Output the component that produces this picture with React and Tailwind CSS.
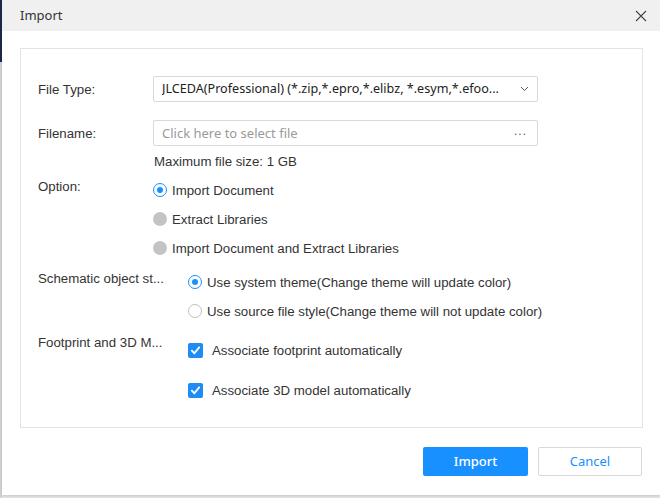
import React, { useState } from "react";

const sans = { fontFamily: '"Liberation Sans", Arial, sans-serif' };
const ui = { fontFamily: '"Noto Sans", "Open Sans", sans-serif' };

const Radio = ({ state }) => {
  if (state === "on") {
    return (
      <span className="w-[14px] h-[14px] rounded-full border border-[#1890ff] bg-white flex items-center justify-center shrink-0">
        <span className="w-[6px] h-[6px] rounded-full bg-[#1890ff]" />
      </span>
    );
  }
  if (state === "disabled") {
    return <span className="w-[14px] h-[14px] rounded-full bg-[#c4c4c4] shrink-0" />;
  }
  return <span className="w-[14px] h-[14px] rounded-full border border-[#c0c0c0] bg-white shrink-0" />;
};

const Check = () => (
  <span className="w-[15px] h-[15px] rounded-[2px] bg-[#1e8cf5] flex items-center justify-center shrink-0">
    <svg width="11" height="11" viewBox="0 0 12 12" fill="none">
      <path d="M2 6.2 L4.8 9 L10 2.6" stroke="white" strokeWidth="2" strokeLinecap="round" strokeLinejoin="round" />
    </svg>
  </span>
);

const App = () => {
  const [option, setOption] = useState(0);
  const [theme, setTheme] = useState(0);

  return (
    <div className="w-[660px] h-[498px] flex bg-[#e6e6e6] overflow-hidden" style={sans}>
      {/* strip of the window behind */}
      <div className="w-[2px] flex flex-col">
        <div className="h-[62px] bg-[#1b2b4d]" />
        <div className="flex-1 bg-[#d4d4d4]" />
      </div>

      <div className="flex-1 flex flex-col h-[495px] bg-white shadow-[0_1px_3px_rgba(0,0,0,0.15)]">
        {/* header */}
        <div className="h-[31px] bg-[#f0f0f0] flex items-center justify-between pl-[18px] pr-[13px] shrink-0">
          <span className="text-[13px] text-[#333]" style={ui}>Import</span>
          <svg width="12" height="12" viewBox="0 0 12 12">
            <path d="M1 1 L11 11 M11 1 L1 11" stroke="#444" strokeWidth="1.1" />
          </svg>
        </div>

        {/* body */}
        <div className="px-[18px] pt-[17px] pr-[17px]">
          <div className="h-[380px] border border-[#e3e3e3] pt-[27px] pl-[17px] text-[13.25px] text-[#333]">
            <div className="flex items-center h-[26px]">
              <div className="w-[115px] pt-[2px]">File Type:</div>
              <div className="w-[385px] h-[26px] border border-[#d9d9d9] rounded-[2px] flex items-center pl-[8px] pr-[8px]">
                <span className="flex-1 whitespace-nowrap overflow-hidden text-[12.6px] text-[#222] pt-[1px]" style={ui}>
                  JLCEDA(Professional) (*.zip,*.epro,*.elibz, *.esym,*.efoo...
                </span>
                <svg width="9" height="6" viewBox="0 0 9 6" className="ml-[4px]">
                  <path d="M1 1 L4.5 4.5 L8 1" stroke="#555" strokeWidth="1" fill="none" />
                </svg>
              </div>
            </div>

            <div className="flex items-center h-[26px] mt-[18px]">
              <div className="w-[115px] pt-[2px]">Filename:</div>
              <div className="w-[385px] h-[26px] border border-[#d9d9d9] rounded-[2px] flex items-center pl-[8px] pr-[10px]">
                <span className="flex-1 text-[13px] text-[#9a9a9a] pt-[1px]" style={ui}>Click here to select file</span>
                <span className="text-[#555] text-[12px] tracking-[1px] leading-none -mt-[4px]">...</span>
              </div>
            </div>

            <div className="pl-[116px] mt-[7px] leading-[18px]">Maximum file size: 1 GB</div>

            <div className="flex mt-[6px]">
              <div className="w-[115px] leading-[20px]">Option:</div>
              <div className="flex flex-col gap-[9px] pt-[3px]">
                {["Import Document", "Extract Libraries", "Import Document and Extract Libraries"].map((t, i) => (
                  <div key={t} className="flex items-center gap-[5px] h-[20px] cursor-pointer" onClick={() => i === 0 && setOption(0)}>
                    <Radio state={i === option ? "on" : "disabled"} />
                    <span className="pt-[1px]">{t}</span>
                  </div>
                ))}
              </div>
            </div>

            <div className="flex mt-[11px]">
              <div className="w-[150px] leading-[20px]">Schematic object st...</div>
              <div className="flex flex-col gap-[9px] pt-[3px]">
                {[
                  "Use system theme(Change theme will update color)",
                  "Use source file style(Change theme will not update color)",
                ].map((t, i) => (
                  <div key={t} className="flex items-center gap-[5px] h-[20px] cursor-pointer" onClick={() => setTheme(i)}>
                    <Radio state={i === theme ? "on" : "off"} />
                    <span className="pt-[1px]">{t}</span>
                  </div>
                ))}
              </div>
            </div>

            <div className="flex mt-[12px]">
              <div className="w-[150px] leading-[20px]">Footprint and 3D M...</div>
              <div className="flex flex-col gap-[20px] pt-[7px]">
                {["Associate footprint automatically", "Associate 3D model automatically"].map((t) => (
                  <div key={t} className="flex items-center gap-[9px] h-[20px]">
                    <Check />
                    <span className="pt-[1px]">{t}</span>
                  </div>
                ))}
              </div>
            </div>
          </div>
        </div>

        {/* footer */}
        <div className="flex justify-end gap-[10px] pr-[18px] mt-[19px]">
          <button className="w-[105px] h-[29px] rounded-[2px] bg-[#1890ff] text-white text-[13px] font-medium" style={ui}>
            Import
          </button>
          <button className="w-[104px] h-[29px] rounded-[2px] border border-[#d9d9d9] bg-white text-[#1890ff] text-[13px]" style={ui}>
            Cancel
          </button>
        </div>
      </div>
    </div>
  );
};

export default App;
